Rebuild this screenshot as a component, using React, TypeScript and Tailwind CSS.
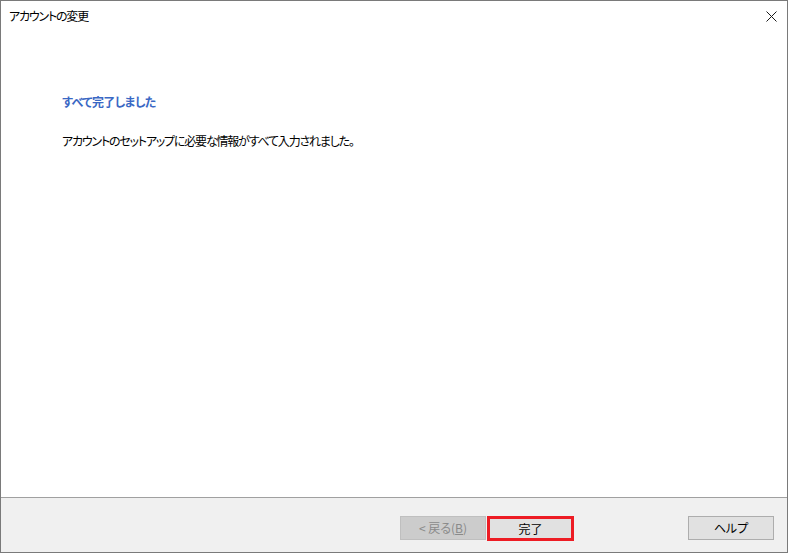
import React from 'react';

const font = { fontFamily: '"Noto Sans CJK JP", "Noto Sans", sans-serif' };

export default function App() {
  return (
    <div
      className="w-[788px] h-[553px] bg-white border border-[#7a7a7a] flex flex-col text-[12px] text-black [font-feature-settings:'palt']"
      style={font}
    >
      {/* title bar */}
      <div className="h-[30px] flex items-center justify-between pl-[8px] pr-[9px] shrink-0">
        <span className="leading-none tracking-[-1.2px]">アカウントの変更</span>
        <svg width="11" height="11" viewBox="0 0 11 11" className="mr-[1px]">
          <path d="M0.5 0.5 L10.5 10.5 M10.5 0.5 L0.5 10.5" stroke="#1a1a1a" strokeWidth="1" />
        </svg>
      </div>

      {/* content */}
      <div className="flex-1 pl-[61px] pt-[64px]">
        <h1 className="text-[12px] font-bold text-[#3a68c4] leading-[14px] tracking-[-0.6px]">すべて完了しました</h1>
        <p className="mt-[25px] leading-[14px] tracking-[-1.2px]">アカウントのセットアップに必要な情報がすべて入力されました。</p>
      </div>

      {/* footer */}
      <div className="h-[55px] shrink-0 border-t border-[#a0a0a0] bg-[#f0f0f0] flex items-start pt-[18px] pr-[13px]">
        <div className="ml-auto flex items-start">
          <button
            disabled
            className="w-[86px] h-[24px] bg-[#cccccc] border border-[#bfbfbf] text-[#8a8a8a] leading-none flex items-center justify-center"
          >
            &lt; 戻る(<span className="underline">B</span>)
          </button>
          <button className="ml-[1px] w-[87px] h-[25px] bg-[#e1e1e1] border-[3px] border-[#ed1c24] leading-none flex items-center justify-center">
            完了
          </button>
        </div>
        <button className="ml-[114px] w-[86px] h-[24px] bg-[#e1e1e1] border border-[#adadad] leading-none flex items-center justify-center">
          ヘルプ
        </button>
      </div>
    </div>
  );
}
